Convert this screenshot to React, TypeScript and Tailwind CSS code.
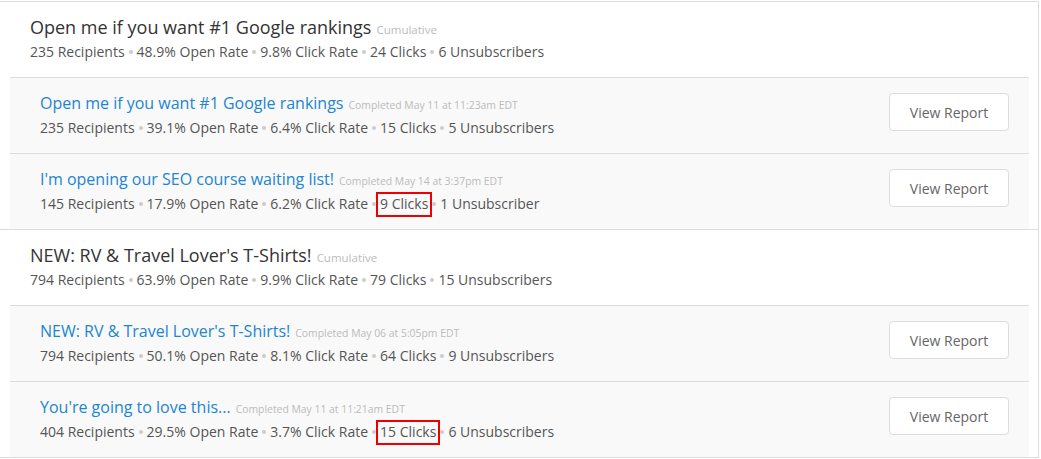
import React from "react";

type Item = {
  title: string;
  completed: string;
  stats: string[];
  highlight?: number;
};

type Group = {
  title: string;
  stats: string[];
  items: Item[];
};

const groups: Group[] = [
  {
    title: "Open me if you want #1 Google rankings",
    stats: ["235 Recipients", "48.9% Open Rate", "9.8% Click Rate", "24 Clicks", "6 Unsubscribers"],
    items: [
      {
        title: "Open me if you want #1 Google rankings",
        completed: "Completed May 11 at 11:23am EDT",
        stats: ["235 Recipients", "39.1% Open Rate", "6.4% Click Rate", "15 Clicks", "5 Unsubscribers"],
      },
      {
        title: "I'm opening our SEO course waiting list!",
        completed: "Completed May 14 at 3:37pm EDT",
        stats: ["145 Recipients", "17.9% Open Rate", "6.2% Click Rate", "9 Clicks", "1 Unsubscriber"],
        highlight: 3,
      },
    ],
  },
  {
    title: "NEW: RV & Travel Lover's T-Shirts!",
    stats: ["794 Recipients", "63.9% Open Rate", "9.9% Click Rate", "79 Clicks", "15 Unsubscribers"],
    items: [
      {
        title: "NEW: RV & Travel Lover's T-Shirts!",
        completed: "Completed May 06 at 5:05pm EDT",
        stats: ["794 Recipients", "50.1% Open Rate", "8.1% Click Rate", "64 Clicks", "9 Unsubscribers"],
      },
      {
        title: "You're going to love this...",
        completed: "Completed May 11 at 11:21am EDT",
        stats: ["404 Recipients", "29.5% Open Rate", "3.7% Click Rate", "15 Clicks", "6 Unsubscribers"],
        highlight: 3,
      },
    ],
  },
];

function Stats({ stats, highlight }: { stats: string[]; highlight?: number }) {
  return (
    <div className="flex items-center text-[14px] leading-[20px] text-[#555555] whitespace-nowrap">
      {stats.map((s, i) => (
        <React.Fragment key={i}>
          {i > 0 && (
            <span className="mx-[4px] inline-block h-[4px] w-[4px] rounded-full bg-[#cccccc]" />
          )}
          {i === highlight ? (
            <span className="relative">
              {s}
              <span className="absolute -left-[4px] -right-[4px] -top-[2px] -bottom-[3px] border-2 border-[#ee0000]" />
            </span>
          ) : (
            <span>{s}</span>
          )}
        </React.Fragment>
      ))}
    </div>
  );
}

export default function App() {
  return (
    <div
      className="min-h-[459px] bg-white pt-px"
      style={{ fontFamily: '"Open Sans", "Noto Sans", sans-serif' }}
    >
      <div className="w-[1039px] border-r border-b border-[#dddddd]">
        {groups.map((g, gi) => (
          <div key={gi} className="border-t border-[#dddddd]">
            <div className="pl-[30px] pt-[13px] pb-[15px]">
              <div className="flex items-baseline whitespace-nowrap">
                <span className="text-[18px] leading-[24px] text-[#333333]">{g.title}</span>
                <span className="ml-[5px] text-[11.5px] text-[#bbbbbb]">Cumulative</span>
              </div>
              <div className="mt-[3px]">
                <Stats stats={g.stats} />
              </div>
            </div>
            <div className="ml-[10px] mr-[9px]">
              {g.items.map((it, ii) => (
                <div
                  key={ii}
                  className="flex items-start justify-between border-t border-[#dddddd] bg-[#f9f9f9] pl-[30px] pr-[20px] pt-[14px] pb-[15px]"
                >
                  <div>
                    <div className="flex items-baseline whitespace-nowrap">
                      <span className="text-[16px] leading-[22px] text-[#2185d0]">{it.title}</span>
                      <span className="ml-[5px] text-[10.4px] text-[#bbbbbb]">{it.completed}</span>
                    </div>
                    <div className="mt-[4px]">
                      <Stats stats={it.stats} highlight={it.highlight} />
                    </div>
                  </div>
                  <button className="mt-px h-[38px] w-[120px] rounded-[4px] border border-[#dddddd] bg-white text-[14px] text-[#666666]">
                    View Report
                  </button>
                </div>
              ))}
            </div>
          </div>
        ))}
      </div>
    </div>
  );
}
